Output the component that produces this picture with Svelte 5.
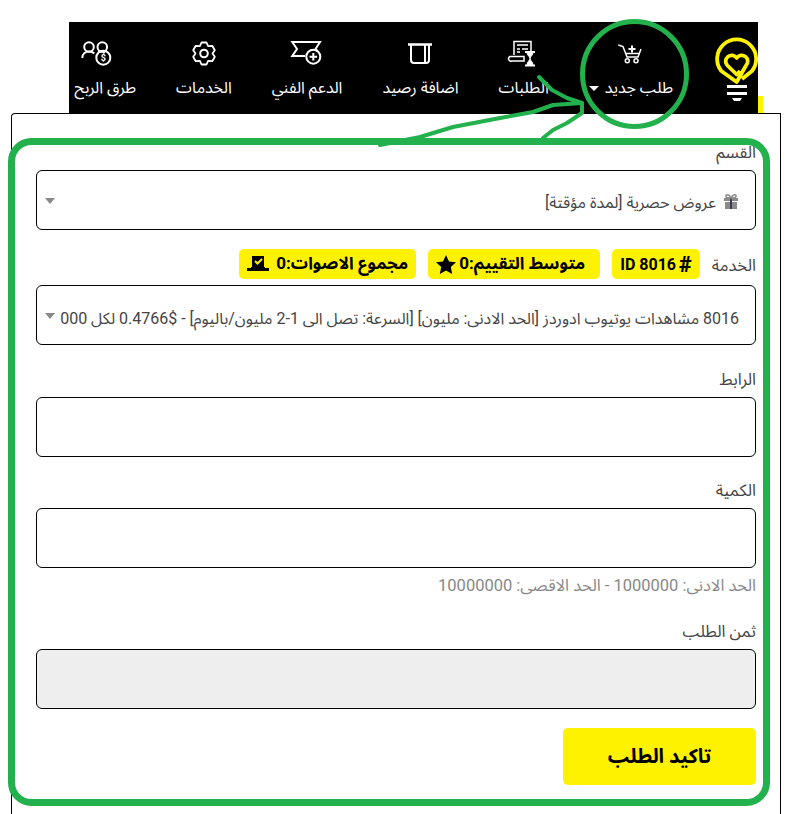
<script>
  const navItems = [
    { id: 'new', label: 'طلب جديد', caret: true },
    { id: 'orders', label: 'الطلبات' },
    { id: 'funds', label: 'اضافة رصيد' },
    { id: 'support', label: 'الدعم الفني' },
    { id: 'services', label: 'الخدمات' },
    { id: 'earn', label: 'طرق الربح' }
  ];

  // six teeth around (17, 13.5)
  function gearPath(cx, cy) {
    const pt = (r, deg) => {
      const a = (deg * Math.PI) / 180;
      return `${(cx + r * Math.cos(a)).toFixed(1)} ${(cy + r * Math.sin(a)).toFixed(1)}`;
    };
    let d = '';
    for (let i = 0; i < 6; i++) {
      const c = i * 60 - 90;
      d += `${i ? 'L' : 'M'}${pt(8.6, c - 28)} L${pt(11.3, c - 13)} L${pt(11.3, c + 13)} L${pt(8.6, c + 28)} `;
    }
    return d + 'Z';
  }
</script>

<div class="page" dir="rtl">
  <nav class="nav">
    <div class="logo">
      <svg width="44" height="68" viewBox="0 0 44 68" fill="none">
        <path d="M28 43L38 35A19.500 19.500 0 1 0 7.300 35L22.700 46 32 29.500A6 6 0 1 0 22.700 22 6 6 0 1 0 13.400 29.500L22.700 38.500 26 35" stroke="#fff200" stroke-width="3.800" stroke-linejoin="round"/>
        <path d="M13 50.500h20M13 57.500h20" stroke="#fff" stroke-width="3"/>
        <path d="M18 62h10l-2 3h-6z" fill="#fff"/>
      </svg>
    </div>
    {#each navItems as item}
      <div class="nav-item">
        <svg class="nav-icon" class:earn={item.id === 'earn'} width="34" height="30" viewBox="0 0 34 30" fill="none" stroke="#fff" stroke-width="1.500">
          {#if item.id === 'new'}
            <path d="M4.300 5L9 6.500 13 17H24L27 9"/><path d="M11.500 13.500H25"/><circle cx="13.300" cy="20.700" r="2"/><circle cx="22" cy="20.700" r="2"/><path d="M18 5.500v7M14.500 9h7" stroke-width="2"/>
          {:else if item.id === 'orders'}
            <path d="M7 15V1.500H24V11"/><path d="M3 16.500H17V21H5a2.200 2.200 0 0 1-2-4.500z"/><path d="M10 5H21M10 9h3M15 9h6M10 12h3"/><path d="M18 12h10M18 25.500h10" stroke-width="2"/><path d="M20 12c0 4 3 4 3 6.500 0 2-3 3-3 7h6c0-4-3-5-3-7 0-2.500 3-2.500 3-6.500z" fill="#fff" stroke-width="1"/>
          {:else if item.id === 'funds'}
            <path d="M5 4.500H29" stroke-width="2.500"/><path d="M8 5V20a3 3 0 0 0 3 3H23a3 3 0 0 0 3-3V5M22 5V23" stroke-width="2"/>
          {:else if item.id === 'support'}
            <path d="M15 16H2.300L7 9 2.300 2H30L25.500 9 27.500 11" stroke-width="2"/><circle cx="23.300" cy="16.700" r="7" stroke-width="2"/><path d="M19.500 16.700h7.600M23.300 13v7.500" stroke-width="2"/>
          {:else if item.id === 'services'}
            <circle cx="17" cy="13.500" r="3.800" stroke-width="2"/><path d={gearPath(17, 13.500)} stroke-width="1.800" stroke-linejoin="round"/>
          {:else}
            <circle cx="9" cy="7" r="4.800" stroke-width="2"/><circle cx="22.300" cy="7" r="4.800" stroke-width="2"/><path d="M2.300 18c0-4 3-6.500 7-6.500 2.500 0 4 1 5 2M18 11.800c2-.5 5-.3 7 .7" stroke-width="2"/><circle cx="23.300" cy="17.700" r="7" stroke-width="2"/><text x="23.300" y="21" text-anchor="middle" font-size="9" font-weight="700" fill="#fff" stroke="none" font-family="Roboto, sans-serif">$</text>
          {/if}
        </svg>
        <span class="nav-label">
          {item.label}
          {#if item.caret}<i class="caret"></i>{/if}
        </span>
      </div>
    {/each}
    <span class="tab"></span>
  </nav>

  <main class="card">
    <div class="field">
      <label class="lbl" for="cat">القسم</label>
      <div class="box" id="cat">
        <svg class="gift" width="16" height="15" viewBox="0 0 16 15">
          <path d="M1 4h14v3H1zM2 8h12v7H2z" fill="#8a8a8a"/>
          <path d="M7 4h2v11H7z" fill="#3a3a55"/>
          <path d="M8 4C6 0 2.500 0 3 2.500 3.300 4 6 4 8 4c2 0 4.700 0 5-1.500C13.500 0 10 0 8 4z" fill="none" stroke="#8a8a8a" stroke-width="1.500"/>
        </svg>
        عروض حصرية [لمدة مؤقتة]
        <i class="arrow"></i>
      </div>
    </div>

    <div class="field">
      <div class="label-row">
        <span class="lbl">الخدمة</span>
        <span class="chip id" dir="ltr">ID 8016 <b class="hash">#</b></span>
        <span class="chip rating">متوسط التقييم:0
          <svg width="20" height="19" viewBox="0 0 20 19"><path d="M10 0l3 6.500 7 .8-5.200 4.700 1.400 7L10 15.500 3.800 19l1.400-7L0 7.300l7-.8z" fill="#000"/></svg>
        </span>
        <span class="chip votes">مجموع الاصوات:0
          <svg width="22" height="18" viewBox="0 0 22 18"><path d="M5 1h12v11H5zM0 13h4v-1h14v1h4v3H0z" fill="#000"/><path d="M8 6l2.500 2.500L15 4" stroke="#fff200" stroke-width="2" fill="none"/></svg>
        </span>
      </div>
      <div class="box service" id="svc">
        <span class="svc-text">8016 مشاهدات يوتيوب ادوردز [الحد الادنى: مليون] [السرعة: تصل الى 1-2 مليون/باليوم] - $0.4766 لكل 000</span>
        <i class="arrow"></i>
      </div>
    </div>

    <div class="field link">
      <label class="lbl" for="link">الرابط</label>
      <input class="box" id="link" type="text" />
    </div>

    <div class="field qty">
      <label class="lbl" for="qty">الكمية</label>
      <input class="box" id="qty" type="text" />
      <p class="hint">الحد الادنى: 1000000 - الحد الاقصى: 10000000</p>
    </div>

    <div class="field total">
      <label class="lbl" for="total">ثمن الطلب</label>
      <input class="box readonly" id="total" type="text" readonly />
    </div>

    <button class="submit">تاكيد الطلب</button>
  </main>

  <!-- green marker annotation drawn over the screenshot -->
  <svg class="marker" width="791" height="814" fill="none" stroke="#22b14c" stroke-linejoin="round" stroke-linecap="round">
    <rect x="11.500" y="141.500" width="755" height="661" rx="20" stroke-width="7"/>
    <ellipse cx="634.500" cy="74" rx="52" ry="52.500" stroke-width="5"/>
    <path d="M539 77L552 90 567 98 582 103V113L567 123 553 130 543 138" stroke-width="4"/>
    <path d="M582 103L553 105 533 112 500 118 453 127 420 137 380 145" stroke-width="4"/>
  </svg>
</div>

<style>
  :global(body) { background: #fff; }

  .page {
    position: relative;
    width: 791px;
    height: 814px;
    overflow: hidden;
    padding-top: 22px;
    box-sizing: border-box;
    font-family: Roboto, "Noto Sans Arabic", "DejaVu Sans", sans-serif;
  }

  .nav {
    position: relative;
    z-index: 1;
    display: flex;
    align-items: flex-start;
    height: 91px;
    margin-left: 69px;
    margin-right: 33px;
    background: #000;
    color: #fff;
  }

  .logo { width: 44px; padding-top: 14px; margin-left: 21px; flex: none; }

  .nav-item {
    display: flex;
    flex-direction: column;
    align-items: center;
    padding: 18px 20px 0;
    white-space: nowrap;
  }

  .nav-icon.earn { margin-right: 16px; }

  .nav-label { margin-top: 6px; font-size: 16px; line-height: 24px; }

  .caret {
    display: inline-block;
    border: 5px solid transparent;
    border-top: 5px solid #fff;
    border-bottom: 0;
    vertical-align: middle;
    margin-right: 2px;
  }

  .tab {
    position: absolute;
    top: 74px;
    right: -5px;
    width: 5px;
    height: 17px;
    background: #fff200;
  }

  .card {
    height: 720px;
    margin-left: 11px;
    margin-right: 10px;
    padding: 27px 24px 0;
    border: 1px solid #000;
    border-bottom: 0;
    border-top-left-radius: 4px;
    box-sizing: border-box;
    display: flex;
    flex-direction: column;
  }

  .field { display: flex; flex-direction: column; }

  .lbl { font-size: 16.500px; line-height: 23px; margin-bottom: 6px; color: #444; }

  .label-row {
    display: flex;
    align-items: center;
    gap: 12px;
    margin-top: 19px;
    margin-bottom: 6px;
  }

  .label-row .lbl { margin: 2px 0 0; }

  .chip {
    display: inline-flex;
    align-items: center;
    gap: 3px;
    height: 30px;
    padding: 0 8px;
    background: #fff200;
    border-radius: 5px;
    font-size: 17px;
    font-weight: 700;
    color: #000;
    white-space: nowrap;
  }

  .chip.id { font-size: 16px; }
  .chip.rating { padding-right: 15px; }
  .chip.votes { gap: 7px; }
  .hash { font-size: 22px; }

  .box {
    position: relative;
    display: flex;
    align-items: center;
    height: 60px;
    padding: 6px 16px 0;
    border: 1px solid #000;
    border-radius: 6px;
    box-sizing: border-box;
    background: #fff;
    font: inherit;
    font-size: 16px;
    color: #444;
  }

  .gift { margin-left: 7px; flex: none; margin-top: -4px; }

  .service { white-space: nowrap; padding-top: 7px; }

  .arrow {
    position: absolute;
    left: 8px;
    top: 27px;
    border: 5px solid transparent;
    border-top: 6px solid #888;
    border-bottom: 0;
  }

  .link { margin-top: 23px; }
  .qty { margin-top: 22px; }
  .total { margin-top: 24px; }

  .hint { margin: 8px 0 0; font-size: 16.500px; line-height: 20px; color: #888; }

  .readonly { background: #eee; }

  .submit {
    align-self: flex-start;
    width: 193px;
    height: 57px;
    margin-top: 19px;
    border: 0;
    border-radius: 5px;
    background: #fff200;
    font: inherit;
    font-size: 20px;
    font-weight: 700;
    color: #000;
  }

  .marker { position: absolute; inset: 0; z-index: 2; pointer-events: none; }
</style>
